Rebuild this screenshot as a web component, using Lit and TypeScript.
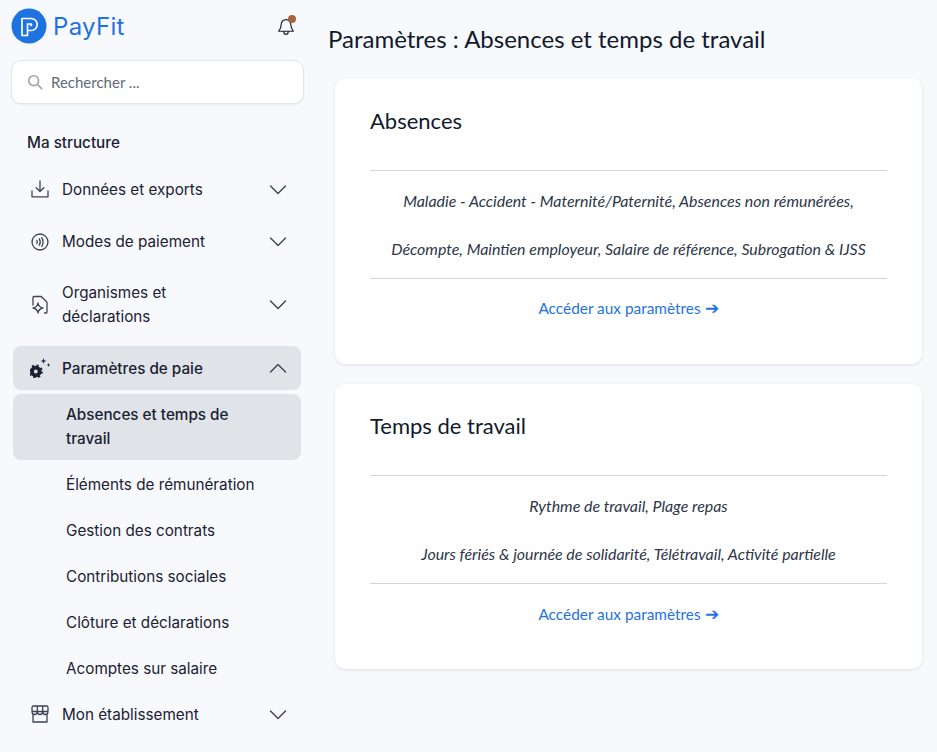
import { LitElement, html, css, svg } from 'lit';
import { customElement } from 'lit/decorators.js';

const chevron = (up = false) => html`<svg class="chev" viewBox="0 0 18 10" width="18" height="10" fill="none" stroke="#3b4252" stroke-width="1.4" stroke-linecap="round" stroke-linejoin="round"><path d=${up ? 'M1.5 9 9 1.5 16.5 9' : 'M1.5 1 9 8.5 16.5 1'}></path></svg>`;

const icon = (body: unknown) => html`<svg class="ico" viewBox="0 0 20 20" width="20" height="20" fill="none" stroke="#3b4252" stroke-width="1.3" stroke-linecap="round" stroke-linejoin="round">${body}</svg>`;

const icons = {
  download: svg`<path d="M10 1v10.500M6.200 7.700l3.800 3.800 3.800-3.800M2 11v5.800h16V11"></path>`,
  pay: svg`<circle cx="10" cy="10" r="8"></circle><path d="M6.800 8.400c.7 1 .7 2.200 0 3.200M9.300 6.800c1.200 2 1.200 4.400 0 6.400M11.800 5.600c1.600 2.800 1.600 6 0 8.800"></path>`,
  doc: svg`<path d="M3 10V2.500a1 1 0 0 1 1-1h7.200L17 7.300V17a1 1 0 0 1-1 1h-1.500"></path><path d="M8 8c.5 3 2 4.500 5 5-3 .5-4.500 2-5 5-.5-3-2-4.500-5-5 3-.5 4.500-2 5-5Z"></path>`,
  shop: svg`<rect x="2" y="1" width="16" height="5.500" rx="1.500"></rect><path d="M2 6.500c0 2 1 3 2.600 3S7.300 8.500 7.300 6.500c0 2 1.100 3 2.700 3s2.700-1 2.700-3c0 2 1.100 3 2.700 3S18 8.500 18 6.500M3 9.500V17h14V9.500M7.300 1.500v5M12.700 1.500v5"></path>`,
};

@customElement('app-root')
export class AppRoot extends LitElement {
  static styles = css`
    :host {
      display: block;
      height: 752px;
      overflow: hidden;
      background: #f8f9fd;
      font-family: Inter, 'Liberation Sans', sans-serif;
      color: #1a2133;
    }
    .page {
      display: grid;
      grid-template-columns: 320px 1fr;
      height: 752px;
    }
    .side {
      padding: 8px 16px 0 11px;
    }
    .brand {
      display: flex;
      align-items: center;
      height: 36px;
      padding-right: 9px;
    }
    .brand .name {
      margin-left: 6px;
      font-size: 24px;
      color: #1f73e0;
      letter-spacing: 0.3px;
      flex: 1;
    }
    .bell {
      position: relative;
      width: 18px;
      height: 19px;
    }
    .bell i {
      position: absolute;
      top: -1.5px;
      right: -1px;
      width: 8px;
      height: 8px;
      border-radius: 50%;
      background: #a8623c;
    }
    .search {
      display: flex;
      align-items: center;
      gap: 8px;
      height: 42px;
      margin-top: 16px;
      padding-left: 15px;
      background: #fff;
      border: 1px solid #e2e6ec;
      border-radius: 10px;
      box-shadow: 0 1px 2px rgba(30, 40, 60, 0.06);
      font-family: Lato, sans-serif;
      font-size: 15px;
      color: #5f6b7a;
    }
    .section {
      margin: 29px 0 0 16px;
      height: 20px;
      line-height: 20px;
      font-size: 15.25px;
      font-weight: 500;
    }
    .nav {
      margin: 15px 3px 0 2px;
    }
    .row {
      display: flex;
      align-items: center;
      gap: 12px;
      padding: 10px 14px 10px 17px;
      margin-bottom: 8px;
      font-size: 15.25px;
      line-height: 24px;
      border-radius: 8px;
    }
    .row.tall {
      padding: 9px 14px 9px 17px;
    }
    .row .label {
      flex: 1;
    }
    .row.open {
      background: #e0e4e8;
      margin-bottom: 4px;
      font-weight: 500;
      padding: 11px 14px 9px 17px;
    }
    .row.open .ico,
    .row.open .chev {
      margin-top: -2px;
    }
    .sub {
      padding: 11px 40px 11px 53px;
      font-size: 15.25px;
      line-height: 24px;
    }
    .sub.active {
      background: #e0e4e8;
      border-radius: 8px;
      font-weight: 500;
      margin-bottom: 2px;
      padding: 9px 40px 9px 53px;
    }
    .sub.last {
      margin-bottom: 1px;
    }
    .ico,
    .chev {
      flex: none;
    }
    .main {
      padding: 25px 15px 0 8px;
      font-family: Lato, sans-serif;
    }
    h1 {
      margin: 0;
      font-size: 24px;
      font-weight: 400;
      line-height: 28px;
      color: #111a2c;
    }
    .cards {
      margin-top: 25px;
    }
    .card {
      margin: 0 0 20px 7px;
      padding: 26px 35px 0;
      height: 286px;
      box-sizing: border-box;
      background: #fff;
      border-radius: 10px;
      box-shadow: 0 1px 3px rgba(30, 40, 60, 0.12);
    }
    .card.second {
      padding-top: 25px;
      height: 285px;
    }
    .card.second a {
      margin-top: 18px;
    }
    h2 {
      margin: 0;
      font-size: 22px;
      font-weight: 400;
      line-height: 34px;
      height: 66px;
      border-bottom: 1px solid #cfd5e3;
      color: #111a2c;
    }
    .desc {
      margin: 6px 0 0;
      padding-bottom: 5px;
      border-bottom: 1px solid #cfd5e3;
      text-align: center;
      font-style: italic;
      font-size: 15.95px;
      line-height: 48px;
      color: #2d3648;
    }
    a {
      display: block;
      margin-top: 17px;
      text-align: center;
      font-size: 15.4px;
      line-height: 24px;
      color: #1f73e0;
      text-decoration: none;
    }
    a span {
      font-size: 17px;
    }
  `;

  render() {
    return html`<div class="page">
      <aside class="side">
        <div class="brand">
          <svg viewBox="0 0 36 36" width="36" height="36">
            <circle cx="18" cy="18" r="17.500" fill="#1f73e0"></circle>
            <path d="M11 10.500h9.200a6 6 0 0 1 0 12h-3.700v5H11ZM16.500 22.500V16h3.500a.8.8 0 0 1 0 1.500" fill="none" stroke="#fff" stroke-width="1.700" stroke-linecap="round" stroke-linejoin="round"></path>
          </svg>
          <span class="name">PayFit</span>
          <div class="bell">
            <svg viewBox="0 0 20 22" width="18" height="19" fill="none" stroke="#1a2133" stroke-width="1.400" stroke-linecap="round" stroke-linejoin="round">
              <path d="M10 3a5.500 5.500 0 0 0-5.500 5.500c0 4-1.500 6-3 8h17c-1.500-2-3-4-3-8A5.500 5.500 0 0 0 10 3ZM7.500 17c0 2 1.200 3 2.500 3s2.500-1 2.500-3"></path>
            </svg>
            <i></i>
          </div>
        </div>
        <div class="search">
          <svg viewBox="0 0 18 18" width="16" height="16" fill="none" stroke="#a0a5b0" stroke-width="1.900" stroke-linecap="round"><circle cx="7.500" cy="7.500" r="5.500"></circle><path d="m11.800 11.800 4.700 4.700"></path></svg>
          Rechercher ...
        </div>
        <div class="section">Ma structure</div>
        <nav class="nav">
          <div class="row">${icon(icons.download)}<span class="label">Données et exports</span>${chevron()}</div>
          <div class="row">${icon(icons.pay)}<span class="label">Modes de paiement</span>${chevron()}</div>
          <div class="row tall">${icon(icons.doc)}<span class="label">Organismes et déclarations</span>${chevron()}</div>
          <div class="row open">
            <svg class="ico" viewBox="0 0 20 20" width="20" height="20" fill="none" stroke="#1a2133">
              <circle cx="5.800" cy="13.500" r="3.800" stroke-width="3.800"></circle>
              <circle cx="5.800" cy="13.500" r="6" stroke-width="2" stroke-dasharray="2.200 2.510"></circle>
              <path fill="#1a2133" stroke="none" d="M13.500 0l.7 2.300 2.300.7-2.300.7-.7 2.300-.7-2.300-2.300-.7 2.300-.7ZM18.500 5l.5 1.500 1.500.5-1.500.5-.5 1.500-.5-1.500-1.500-.5 1.500-.5Z"></path>
            </svg>
            <span class="label">Paramètres de paie</span>${chevron(true)}
          </div>
          <div class="sub active">Absences et temps de travail</div>
          <div class="sub">Éléments de rémunération</div>
          <div class="sub">Gestion des contrats</div>
          <div class="sub">Contributions sociales</div>
          <div class="sub">Clôture et déclarations</div>
          <div class="sub last">Acomptes sur salaire</div>
          <div class="row">${icon(icons.shop)}<span class="label">Mon établissement</span>${chevron()}</div>
        </nav>
      </aside>
      <main class="main">
        <h1>Paramètres : Absences et temps de travail</h1>
        <div class="cards">
          <section class="card">
            <h2>Absences</h2>
            <p class="desc">Maladie - Accident - Maternité/Paternité, Absences non rémunérées,<br />Décompte, Maintien employeur, Salaire de référence, Subrogation &amp; IJSS</p>
            <a href="#">Accéder aux paramètres <span>➔</span></a>
          </section>
          <section class="card second">
            <h2>Temps de travail</h2>
            <p class="desc">Rythme de travail, Plage repas<br />Jours fériés &amp; journée de solidarité, Télétravail, Activité partielle</p>
            <a href="#">Accéder aux paramètres <span>➔</span></a>
          </section>
        </div>
      </main>
    </div>`;
  }
}
